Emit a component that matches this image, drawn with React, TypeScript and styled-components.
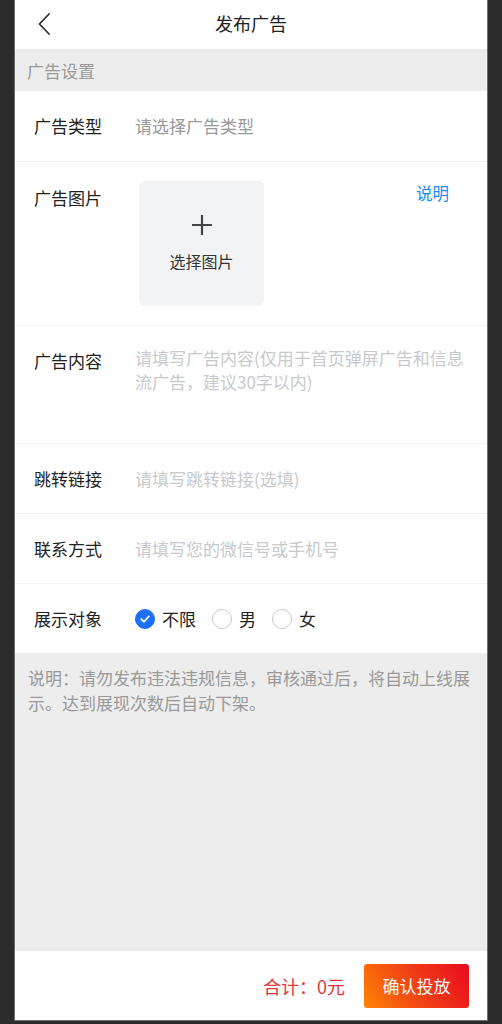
import React from 'react';
import styled, { createGlobalStyle } from 'styled-components';

const GlobalStyle = createGlobalStyle`
  html, body {
    margin: 0;
    padding: 0;
    background: #2b2b2b;
  }
  body {
    font-family: "Noto Sans CJK SC", "Noto Sans", sans-serif;
  }
  * {
    box-sizing: border-box;
  }
`;

const Frame = styled.div`
  width: 474px;
  height: 1021px;
  margin-left: 14px;
  display: flex;
  flex-direction: column;
  background: #fff;
  border: 1px solid #6e6e6e;
  border-top: none;
`;

const NavBar = styled.div`
  height: 49px;
  padding-bottom: 4px;
  display: flex;
  align-items: center;
  justify-content: center;
  position: relative;
  background: #fff;
`;

const BackButton = styled.div`
  position: absolute;
  left: 22px;
  top: 13px;
  width: 14px;
  height: 22px;
  display: flex;
`;

const Title = styled.div`
  font-size: 18px;
  color: #222;
  line-height: 24px;
`;

const SectionHead = styled.div`
  height: 42px;
  padding-left: 12px;
  display: flex;
  align-items: center;
  background: #ededed;
  color: #999;
  font-size: 17px;
`;

const Row = styled.div<{ $height: number; $top?: boolean; $align?: string }>`
  height: ${p => p.$height}px;
  display: flex;
  align-items: ${p => p.$align || 'center'};
  padding: 0 18px 0 19px;
  border-top: ${p => (p.$top ? '1px solid #f2f2f2' : 'none')};
  font-size: 17px;
  line-height: 24px;
`;

const Label = styled.div<{ $offset?: number }>`
  width: 101px;
  flex-shrink: 0;
  color: #222;
  margin-top: ${p => p.$offset || 0}px;
`;

const Placeholder = styled.div<{ $tone?: 'dark' | 'light' }>`
  flex: 1;
  color: ${p => (p.$tone === 'dark' ? '#999' : '#c8c9cc')};
`;

const TextArea = styled(Placeholder)`
  margin-top: 20px;
  margin-right: -4px;
`;

const Uploader = styled.div`
  width: 125px;
  height: 125px;
  margin-top: 19px;
  margin-left: 4px;
  border-radius: 6px;
  background: #f2f3f5;
  display: flex;
  flex-direction: column;
  align-items: center;
  padding-top: 33px;
  gap: 13px;
`;

const UploadText = styled.div`
  font-size: 16px;
  line-height: 24px;
  color: #333;
`;

const HelpLink = styled.div`
  margin-left: auto;
  margin-top: 19px;
  margin-right: 20px;
  color: #1989fa;
  font-size: 16.5px;
`;

const RadioGroup = styled.div`
  display: flex;
  align-items: center;
`;

const RadioItem = styled.div`
  display: flex;
  align-items: center;
  gap: 7px;
  margin-right: 16px;
  color: #222;
`;

const RadioDot = styled.div<{ $checked?: boolean }>`
  width: 20px;
  height: 20px;
  border-radius: 50%;
  display: flex;
  align-items: center;
  justify-content: center;
  background: ${p => (p.$checked ? '#1f6ffd' : '#fff')};
  border: 1px solid ${p => (p.$checked ? '#1f6ffd' : '#c8c9cc')};
`;

const Notice = styled.div`
  flex: 1;
  background: #ededed;
  padding: 12px 14px 0 13px;
  color: #999;
  font-size: 17px;
  line-height: 25px;
`;

const Footer = styled.div`
  height: 69px;
  display: flex;
  align-items: center;
  justify-content: flex-end;
  padding-right: 18px;
  background: #fff;
`;

const Total = styled.div`
  color: #e4393c;
  font-size: 18px;
  margin-right: 19px;
`;

const SubmitButton = styled.button`
  width: 105px;
  height: 44px;
  border: none;
  border-radius: 3px;
  background: linear-gradient(60deg, #ff8205 0%, #f03a17 55%, #e80b1e 100%);
  color: #fff;
  font-family: inherit;
  font-size: 17px;
  padding: 0;
`;

const genders = [
  { text: '不限', checked: true },
  { text: '男', checked: false },
  { text: '女', checked: false },
];

export default function App() {
  return (
    <>
      <GlobalStyle />
      <Frame>
        <NavBar>
          <BackButton>
            <svg width="14" height="22" viewBox="0 0 14 22" fill="none">
              <path d="M12 1 L2.5 11 L12 21" stroke="#333" strokeWidth="1.8" strokeLinecap="round" strokeLinejoin="round" />
            </svg>
          </BackButton>
          <Title>发布广告</Title>
        </NavBar>

        <SectionHead>广告设置</SectionHead>

        <Row $height={70}>
          <Label>广告类型</Label>
          <Placeholder $tone="dark">请选择广告类型</Placeholder>
        </Row>

        <Row $height={164} $top $align="flex-start">
          <Label $offset={24}>广告图片</Label>
          <Uploader>
            <svg width="22" height="22" viewBox="0 0 22 22">
              <path d="M11 1 V21 M1 11 H21" stroke="#444" strokeWidth="2.2" />
            </svg>
            <UploadText>选择图片</UploadText>
          </Uploader>
          <HelpLink>说明</HelpLink>
        </Row>

        <Row $height={118} $top $align="flex-start">
          <Label $offset={23}>广告内容</Label>
          <TextArea>请填写广告内容(仅用于首页弹屏广告和信息流广告，建议30字以内)</TextArea>
        </Row>

        <Row $height={70} $top>
          <Label>跳转链接</Label>
          <Placeholder>请填写跳转链接(选填)</Placeholder>
        </Row>

        <Row $height={70} $top>
          <Label>联系方式</Label>
          <Placeholder>请填写您的微信号或手机号</Placeholder>
        </Row>

        <Row $height={70} $top>
          <Label>展示对象</Label>
          <RadioGroup>
            {genders.map(g => (
              <RadioItem key={g.text}>
                <RadioDot $checked={g.checked}>
                  {g.checked && (
                    <svg width="12" height="12" viewBox="0 0 12 12" fill="none">
                      <path d="M2.2 6.2 L5 8.8 L9.8 3.4" stroke="#fff" strokeWidth="1.7" strokeLinecap="round" strokeLinejoin="round" />
                    </svg>
                  )}
                </RadioDot>
                {g.text}
              </RadioItem>
            ))}
          </RadioGroup>
        </Row>

        <Notice>说明：请勿发布违法违规信息，审核通过后，将自动上线展示。达到展现次数后自动下架。</Notice>

        <Footer>
          <Total>合计：0元</Total>
          <SubmitButton>确认投放</SubmitButton>
        </Footer>
      </Frame>
    </>
  );
}
